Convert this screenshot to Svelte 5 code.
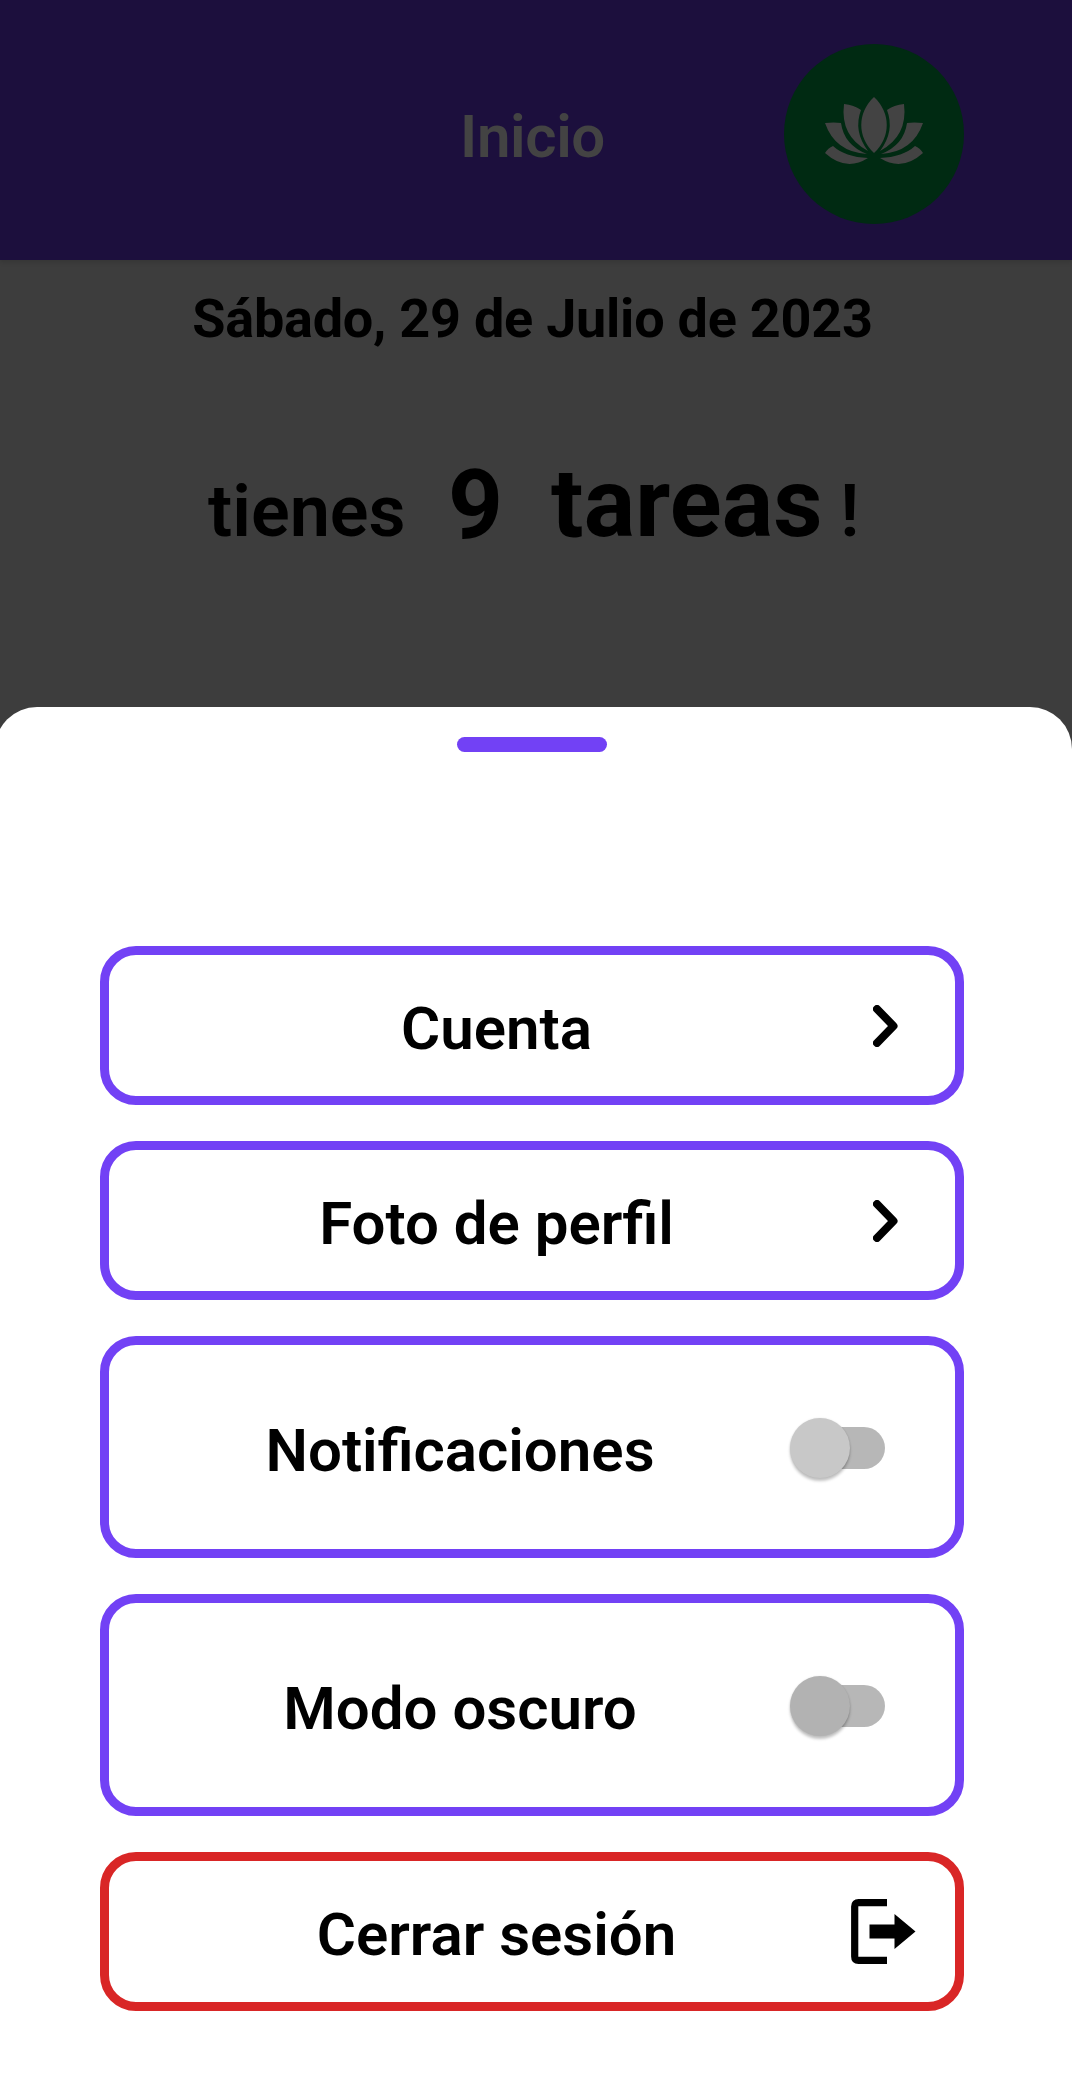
<script>
  const items = [
    { id: 'account', label: 'Cuenta', kind: 'link' },
    { id: 'photo', label: 'Foto de perfil', kind: 'link' },
    { id: 'notifications', label: 'Notificaciones', kind: 'switch' },
    { id: 'dark', label: 'Modo oscuro', kind: 'switch' },
    { id: 'logout', label: 'Cerrar sesión', kind: 'logout' }
  ];
</script>

<div class="screen">
  <header>
    <h1>Inicio</h1>
    <div class="avatar">
      <svg viewBox="0 0 180 180" width="180" height="180" aria-hidden="true">
        <g fill="#434343">
          <path d="M90 53C73 69 73 93 90 109C107 93 107 69 90 53Z" />
          <g id="petals">
            <path d="M60 60Q70 61 77 66Q69 87 84 107Q56 92 60 60Z" />
            <path d="M41 79Q50 78 57 79Q60 101 83 110Q51 108 41 79Z" />
            <path d="M49 102Q61 113 84 114Q62 128 41 109Q44 104 49 102Z" />
          </g>
          <use href="#petals" transform="translate(180 0) scale(-1 1)" />
        </g>
      </svg>
    </div>
  </header>

  <main>
    <p class="date">Sábado, 29 de Julio de 2023</p>
    <p class="tasks">
      <span class="lead">tienes</span>
      <strong class="count">9</strong>
      <strong class="noun">tareas</strong>
      <span class="mark">!</span>
    </p>
  </main>

  <section class="sheet">
    <div class="handle"></div>
    <div class="list">
      {#each items as item (item.id)}
        <button class="card {item.kind} {item.id}">
          <span class="label">{item.label}</span>
          {#if item.kind === 'link'}
            <svg class="chevron" viewBox="0 0 25 42" width="25" height="42" aria-hidden="true">
              <path d="M4 4L20.5 21L4 38" fill="none" stroke="#000" stroke-width="8" stroke-linecap="round" stroke-linejoin="round" />
            </svg>
          {:else if item.kind === 'switch'}
            <span class="toggle"><span class="thumb"></span></span>
          {:else}
            <svg class="exit" viewBox="0 0 65 65" width="65" height="65" aria-hidden="true">
              <path d="M36 3.7H7.5Q3.7 3.7 3.7 7.5V57.5Q3.7 61.3 7.5 61.3H36" fill="none" stroke="#000" stroke-width="7.2" />
              <path d="M18.5 25.5H43.5V15L64.5 32.5L43.5 50V39.5H18.5Z" />
            </svg>
          {/if}
        </button>
      {/each}
    </div>
  </section>
</div>

<style>
  :global(body) {
    margin: 0;
    background: #3d3d3d;
  }
  .screen {
    width: 1072px;
    height: 2077px;
    overflow: hidden;
    display: flex;
    flex-direction: column;
    font-family: Roboto, sans-serif;
    color: #000;
    background: #3d3d3d;
  }
  header {
    flex: none;
    height: 260px;
    box-sizing: border-box;
    padding: 7px 108px 0 100px;
    display: grid;
    grid-template-columns: 180px 1fr 180px;
    align-items: center;
    background: #1c0f3d;
    box-shadow: 0 2px 5px rgba(0, 0, 0, 0.14);
  }
  h1 {
    grid-column: 2;
    margin: 0;
    padding: 6px 0 0 1px;
    text-align: center;
    font-size: 60px;
    font-weight: 600;
    letter-spacing: -0.4px;
    line-height: 70px;
    color: #434343;
  }
  .avatar {
    width: 180px;
    height: 180px;
    border-radius: 50%;
    background: #002a12;
  }
  .avatar svg {
    display: block;
  }
  main {
    flex: none;
    height: 447px;
  }
  p {
    margin: 0;
  }
  .date {
    padding: 27px 7px 0 0;
    text-align: center;
    font-size: 54px;
    font-weight: 700;
    letter-spacing: -0.25px;
    line-height: 64px;
  }
  .tasks {
    display: flex;
    align-items: baseline;
    padding: 96px 0 0 208px;
    line-height: 112px;
    white-space: nowrap;
  }
  .lead {
    width: 240px;
    font-size: 72px;
    font-weight: 600;
  }
  .count {
    width: 103px;
    font-size: 96px;
    font-weight: 700;
    transform: translateY(2px);
  }
  .noun {
    width: 289px;
    font-size: 96px;
    font-weight: 700;
    letter-spacing: 0.2px;
  }
  .mark {
    font-size: 72px;
    font-weight: 600;
  }
  .sheet {
    flex: none;
    width: 1077px;
    height: 1370px;
    margin-left: -5px;
    box-sizing: border-box;
    padding: 30px 108px 0 105px;
    border-radius: 42px 42px 0 0;
    background: #fff;
  }
  .handle {
    width: 150px;
    height: 15px;
    margin: 0 auto;
    border-radius: 8px;
    background: #7241f5;
  }
  .list {
    display: flex;
    flex-direction: column;
    gap: 36px;
    padding-top: 194px;
  }
  .card {
    display: flex;
    align-items: center;
    height: 159px;
    box-sizing: border-box;
    padding: 1px 0 0 11px;
    border: 9px solid #7241f5;
    border-radius: 36px;
    background: #fff;
    font-family: inherit;
    font-size: 60px;
    font-weight: 600;
    line-height: 70px;
    color: #000;
  }
  .card.switch {
    height: 222px;
    padding: 2px 0 0 18px;
  }
  .card.logout {
    padding: 0 0 0 33px;
    border-color: #d92626;
  }
  .label {
    flex: 1;
    padding-top: 6px;
    text-align: center;
  }
  .chevron {
    margin-right: 57px;
  }
  .exit {
    margin-right: 39px;
  }
  .toggle {
    display: flex;
    align-items: center;
    width: 92px;
    height: 42px;
    margin-right: 70px;
    border-radius: 21px;
    background: linear-gradient(90deg, transparent 20px, #b7b7b7 20px);
  }
  .thumb {
    flex: none;
    width: 60px;
    height: 60px;
    margin-left: -3.5px;
    border-radius: 50%;
    background: #c8c8c8;
    box-shadow: 0 3px 3px rgba(0, 0, 0, 0.24), 0 0 2px rgba(0, 0, 0, 0.1);
  }
  .dark .thumb {
    background: #b2b2b2;
  }
</style>
